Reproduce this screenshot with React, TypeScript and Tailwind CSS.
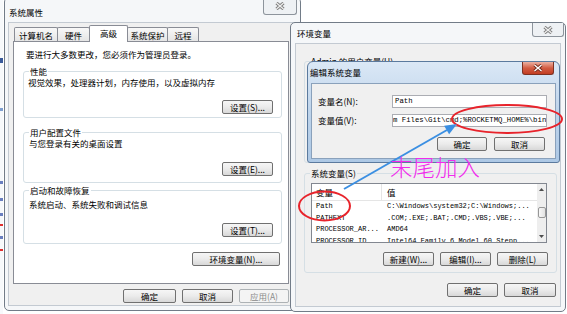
import React from 'react';

type BtnProps = { label: string; className?: string; disabled?: boolean };

function Btn({ label, className = '', disabled = false }: BtnProps) {
  return (
    <div
      className={`flex h-[14px] shrink-0 items-center justify-center rounded-[2px] border leading-none ${
        disabled
          ? 'border-[#adb2b5] bg-[#f4f4f4] text-[#8a8a8a]'
          : 'border-[#707070] bg-linear-to-b from-[#f6f6f6] via-[#ebebeb] to-[#d8d8d8] text-black'
      } ${className}`}
    >
      {label}
    </div>
  );
}

function Group({
  legend,
  legendBg,
  className = '',
  children,
}: {
  legend: string;
  legendBg: string;
  className?: string;
  children?: React.ReactNode;
}) {
  return (
    <div className={`relative flex shrink-0 flex-col rounded-[3px] border border-[#d5dfe5] ${className}`}>
      <span className={`absolute left-[5px] top-[-6px] whitespace-nowrap px-[1px] leading-[10px] ${legendBg}`}>
        {legend}
      </span>
      {children}
    </div>
  );
}

function CloseGlyph({ color, outline }: { color: string; outline: string }) {
  return (
    <svg width="10" height="8" viewBox="0 0 10 8">
      <path d="M1.5 1 L8.5 7 M8.5 1 L1.5 7" stroke={outline} strokeWidth="3.2" />
      <path d="M1.5 1 L8.5 7 M8.5 1 L1.5 7" stroke={color} strokeWidth="1.4" />
    </svg>
  );
}

const tabs = [
  { label: '计算机名', w: 'w-[44px]', active: false },
  { label: '硬件', w: 'w-[33px]', active: false },
  { label: '高级', w: 'w-[39px]', active: true },
  { label: '系统保护', w: 'w-[41px]', active: false },
  { label: '远程', w: 'w-[32px]', active: false },
];

const rows = [
  ['Path', String.raw`C:\Windows\system32;C:\Windows;...`],
  ['PATHEXT', '.COM;.EXE;.BAT;.CMD;.VBS;.VBE;...'],
  ['PROCESSOR_AR...', 'AMD64'],
  ['PROCESSOR_ID', 'Intel64 Family 6 Model 60 Stepp...'],
];

function SystemProperties() {
  return (
    <div className="absolute left-[4px] top-[-3px] flex h-[314px] w-[297px] flex-col rounded-[5px] border border-[#727c88] bg-[#f5f7f9]">
      <div className="flex h-[24px] items-center pl-[4px] pt-[4px]">系统属性</div>
      <div className="absolute right-[3px] top-[0px] flex h-[17px] w-[34px] items-center justify-center rounded-b-[3px] border border-t-0 border-[#8d949c] bg-[#eef1f4]">
        <CloseGlyph color="#eeeeee" outline="#7a7a7a" />
      </div>

      <div className="mx-[3px] mb-[4px] flex flex-1 flex-col border border-[#c3cad2] bg-[#f0f0f0] pl-[4px] pr-[7px] pt-[2px]">
        <div className="flex h-[17px] items-end pl-[1px]">
          {tabs.map((t) =>
            t.active ? (
              <div
                key={t.label}
                className={`relative z-10 -mr-[1px] flex h-[17px] items-center justify-center rounded-t-[2px] border border-b-0 border-[#898c95] bg-white pb-[1px] ${t.w}`}
              >
                {t.label}
              </div>
            ) : (
              <div
                key={t.label}
                className={`-mr-[1px] flex h-[15px] items-center justify-center rounded-t-[2px] border border-b-0 border-[#898c95] bg-linear-to-b from-[#f8f8f8] to-[#e3e3e3] ${t.w}`}
              >
                {t.label}
              </div>
            ),
          )}
        </div>

        <div className="-mt-[1px] flex h-[243px] flex-col border border-[#898c95] bg-white">
          <div className="ml-[12px] mt-[7px] leading-[11px]">要进行大多数更改，您必须作为管理员登录。</div>

          <Group legend="性能" legendBg="bg-white" className="ml-[9px] mr-[6px] mt-[11px] h-[47px]">
            <div className="pl-[4px] pt-[5px] leading-[11px]">视觉效果，处理器计划，内存使用，以及虚拟内存</div>
            <div className="mt-[12px] flex justify-end pr-[8px]">
              <Btn label="设置(S)..." className="w-[51px]" />
            </div>
          </Group>

          <Group legend="用户配置文件" legendBg="bg-white" className="ml-[9px] mr-[6px] mt-[14px] h-[51px]">
            <div className="pl-[5px] pt-[5px] leading-[11px]">与您登录有关的桌面设置</div>
            <div className="mt-[13px] flex justify-end pr-[8px]">
              <Btn label="设置(E)..." className="w-[51px]" />
            </div>
          </Group>

          <Group legend="启动和故障恢复" legendBg="bg-white" className="ml-[9px] mr-[6px] mt-[7px] h-[54px]">
            <div className="pl-[5px] pt-[8px] leading-[11px]">系统启动、系统失败和调试信息</div>
            <div className="mt-[13px] flex justify-end pr-[8px]">
              <Btn label="设置(T)..." className="w-[51px]" />
            </div>
          </Group>

          <div className="mt-[8px] flex justify-end pr-[8px]">
            <Btn label="环境变量(N)..." className="w-[88px]" />
          </div>
        </div>

        <div className="mt-[5px] flex justify-end gap-[6px]">
          <Btn label="确定" className="w-[53px]" />
          <Btn label="取消" className="w-[51px]" />
          <Btn label="应用(A)" className="w-[50px]" disabled />
        </div>
      </div>
    </div>
  );
}

function Arrow({ up }: { up: boolean }) {
  return (
    <div className="flex h-[11px] items-center justify-center">
      <svg width="5" height="3" viewBox="0 0 5 3">
        <path d={up ? 'M0 3 L2.5 0 L5 3 Z' : 'M0 0 L2.5 3 L5 0 Z'} fill="#4d4d4d" />
      </svg>
    </div>
  );
}

function VarList() {
  return (
    <div className="ml-[6px] mt-[9px] flex h-[60px] w-[236px] shrink-0 border border-[#828790] bg-white">
      <div className="flex min-w-0 flex-1 flex-col overflow-hidden">
        <div className="flex h-[17px] shrink-0 items-center border-b border-[#e5e5e5]">
          <div className="flex h-full w-[70px] items-center border-r border-[#e5e5e5] pl-[4px]">变量</div>
          <div className="pl-[5px]">值</div>
        </div>
        {rows.map(([name, value]) => (
          <div
            key={name}
            className="flex h-[11.5px] shrink-0 items-center whitespace-nowrap font-['Liberation_Mono',monospace] text-[7px] leading-none"
          >
            <div className="w-[70px] shrink-0 overflow-hidden pl-[4px]">{name}</div>
            <div className="overflow-hidden pl-[5px]">{value}</div>
          </div>
        ))}
      </div>
      <div className="flex w-[9px] shrink-0 flex-col bg-[#eeeeee]">
        <Arrow up />
        <div className="flex-1">
          <div className="mx-[0.5px] mt-[12px] h-[11px] rounded-[2px] border border-[#979797] bg-linear-to-r from-[#f8f8f8] to-[#e2e2e2]" />
        </div>
        <Arrow up={false} />
      </div>
    </div>
  );
}

function EnvVariables() {
  return (
    <div className="absolute left-[290px] top-[22px] flex h-[290px] w-[276px] flex-col rounded-[5px] border border-[#727c88] bg-[#f5f7f9]">
      <div className="flex h-[20px] items-center pl-[6px] pt-[1px]">环境变量</div>
      <div className="absolute right-[1px] top-[0px] flex h-[14px] w-[32px] items-center justify-center rounded-b-[3px] border border-t-0 border-[#8d949c] bg-[#eef1f4]">
        <CloseGlyph color="#eeeeee" outline="#7a7a7a" />
      </div>

      <div className="mx-[4px] mb-[4px] flex flex-1 flex-col border border-[#c3cad2] bg-[#f0f0f0]">
        <Group legend="Admin 的用户变量(U)" legendBg="bg-[#f0f0f0]" className="ml-[8px] mr-[3px] mt-[17px] h-[102px]" />

        <Group legend="系统变量(S)" legendBg="bg-[#f0f0f0]" className="ml-[8px] mr-[3px] mt-[10px] h-[100px]">
          <VarList />
          <div className="mt-[9px] flex justify-end gap-[6px] pr-[8px]">
            <Btn label="新建(W)..." className="w-[51px]" />
            <Btn label="编辑(I)..." className="w-[51px]" />
            <Btn label="删除(L)" className="w-[51px]" />
          </div>
        </Group>

        <div className="mt-[10px] flex justify-end gap-[6px] pr-[4px]">
          <Btn label="确定" className="w-[51px]" />
          <Btn label="取消" className="w-[52px]" />
        </div>
      </div>
    </div>
  );
}

function EditDialog() {
  return (
    <div className="absolute left-[307px] top-[61px] flex h-[102px] w-[253px] flex-col rounded-b-[3px] rounded-t-[6px] border border-[#5b7a9e] bg-linear-to-b from-[#dbe8f6] via-[#bed4eb] to-[#adc8e5]">
      <div className="flex h-[21px] items-center pl-[2px]">编辑系统变量</div>
      <div className="absolute right-[5px] top-[0px] flex h-[13px] w-[32px] items-center justify-center rounded-b-[3px] border border-t-0 border-[#7d3122] bg-linear-to-b from-[#eab0a2] via-[#d25c43] to-[#c23d22]">
        <CloseGlyph color="#ffffff" outline="#70281a" />
      </div>

      <div className="mx-[3px] mb-[3px] flex flex-1 flex-col border border-[#8aa1bb] bg-[#f0f0f0] pr-[8px]">
        <div className="mt-[11px] flex h-[13px] items-center">
          <div className="w-[80px] shrink-0 pl-[6px]">变量名(N):</div>
          <div className="flex h-[13px] flex-1 items-center border border-[#abadb3] bg-white pl-[2px] font-['Liberation_Mono',monospace] text-[7.3px] leading-none">
            Path
          </div>
        </div>
        <div className="mt-[6px] flex h-[13px] items-center">
          <div className="w-[80px] shrink-0 pl-[6px]">变量值(V):</div>
          <div className="flex h-[13px] flex-1 items-center overflow-hidden whitespace-nowrap border border-[#abadb3] bg-white font-['Liberation_Mono',monospace] text-[7.3px] leading-none">
            <span>m Files\Git\cmd;%ROCKETMQ_HOME%\bin</span>
            <span className="ml-[1px] h-[9px] w-[1px] shrink-0 bg-black" />
          </div>
        </div>
        <div className="mt-[10px] flex justify-end gap-[7px] pr-[2px]">
          <Btn label="确定" className="w-[50px]" />
          <Btn label="取消" className="w-[51px]" />
        </div>
      </div>
    </div>
  );
}

function Annotations() {
  return (
    <>
      <svg className="pointer-events-none absolute left-0 top-0" width="567" height="314" viewBox="0 0 567 314">
        <ellipse cx="507" cy="119" rx="55" ry="14" fill="none" stroke="#e8232b" strokeWidth="2" />
        <ellipse cx="324.5" cy="206" rx="25.5" ry="14.5" fill="none" stroke="#e8232b" strokeWidth="2" />
        <line x1="344" y1="189" x2="447" y2="130" stroke="#3b8fe2" strokeWidth="2" />
        <polygon points="457,124 449.1,134.3 444.1,125.7" fill="#3b8fe2" />
      </svg>
      <div className="pointer-events-none absolute left-[390px] top-[155px] whitespace-nowrap text-[22.5px] font-light leading-none text-[#f02cec]">
        末尾加入
      </div>
    </>
  );
}

export default function App() {
  return (
    <div className="relative h-[314px] w-[567px] overflow-hidden bg-white font-['Noto_Sans_CJK_SC',sans-serif] text-[8.5px] text-black">
      <div className="absolute left-0 top-0 flex h-[314px] w-[3px] flex-col items-start bg-[#f7f9fb]">
        <div className="mt-[58px] h-[5px] w-[3px] bg-[#3a5a9a]" />
        <div className="mt-[45px] h-[3px] w-[3px] bg-[#7f9fd0]" />
        <div className="mt-[70px] h-[3px] w-[3px] bg-[#6a7fc0]" />
        <div className="mt-[14px] h-[3px] w-[3px] bg-[#6a7fc0]" />
        <div className="mt-[12px] h-[3px] w-[3px] bg-[#6a7fc0]" />
        <div className="mt-[8px] h-[2px] w-[3px] bg-[#e03030]" />
        <div className="mt-[10px] h-[3px] w-[3px] bg-[#6a7fc0]" />
        <div className="mt-[10px] h-[2px] w-[3px] bg-[#e03030]" />
      </div>
      <SystemProperties />
      <EnvVariables />
      <EditDialog />
      <Annotations />
    </div>
  );
}
